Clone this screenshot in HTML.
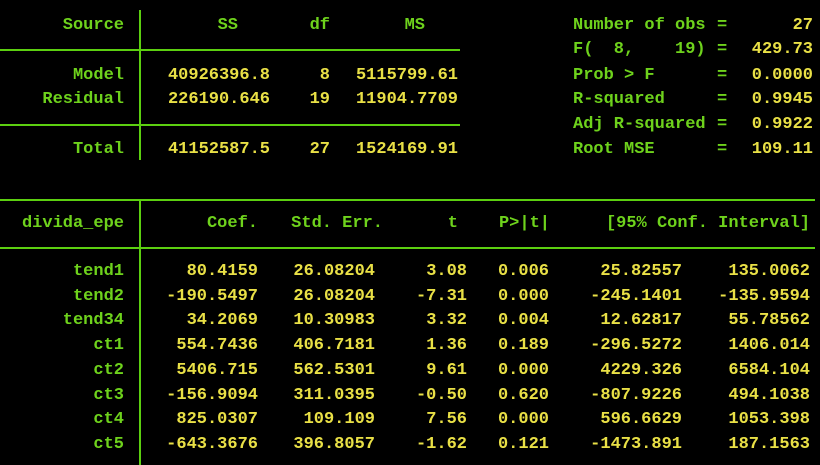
<!DOCTYPE html>
<html><head><meta charset="utf-8"><style>
html,body{margin:0;padding:0;background:#000;width:820px;height:465px;overflow:hidden}
body{position:relative;font-family:"Liberation Mono",monospace;font-weight:bold;font-size:17px}
.t{position:absolute;height:20px;line-height:20px;white-space:pre;margin-top:2px}
.g{color:#6ed21c}.y{color:#e9e046}
.h{position:absolute;height:2px;background:#5ccf10}
.v{position:absolute;width:2px;background:#5ccf10}
</style></head><body>
<div class="v" style="left:139px;top:10px;height:150px"></div>
<div class="h" style="left:0;top:49px;width:460px"></div>
<div class="h" style="left:0;top:124px;width:460px"></div>
<div class="h" style="left:0;top:199px;width:815px"></div>
<div class="h" style="left:0;top:247px;width:815px"></div>
<div class="v" style="left:139px;top:199px;height:266px"></div>

<div class="t g" style="right:696px;top:14px">Source</div>
<div class="t g" style="right:582px;top:14px">SS</div>
<div class="t g" style="right:490px;top:14px">df</div>
<div class="t g" style="right:395px;top:14px">MS</div>

<div class="t g" style="right:696px;top:64px">Model</div>
<div class="t y" style="right:550px;top:64px">40926396.8</div>
<div class="t y" style="right:490px;top:64px">8</div>
<div class="t y" style="right:362px;top:64px">5115799.61</div>

<div class="t g" style="right:696px;top:88px">Residual</div>
<div class="t y" style="right:550px;top:88px">226190.646</div>
<div class="t y" style="right:490px;top:88px">19</div>
<div class="t y" style="right:362px;top:88px">11904.7709</div>

<div class="t g" style="right:696px;top:138px">Total</div>
<div class="t y" style="right:550px;top:138px">41152587.5</div>
<div class="t y" style="right:490px;top:138px">27</div>
<div class="t y" style="right:362px;top:138px">1524169.91</div>

<div class="t g" style="left:573px;top:14px">Number of obs</div>
<div class="t g" style="left:573px;top:38px">F(  8,    19)</div>
<div class="t g" style="left:573px;top:64px">Prob &gt; F</div>
<div class="t g" style="left:573px;top:88px">R-squared</div>
<div class="t g" style="left:573px;top:113px">Adj R-squared</div>
<div class="t g" style="left:573px;top:138px">Root MSE</div>
<div class="t g" style="left:717px;top:14px">=</div>
<div class="t g" style="left:717px;top:38px">=</div>
<div class="t g" style="left:717px;top:64px">=</div>
<div class="t g" style="left:717px;top:88px">=</div>
<div class="t g" style="left:717px;top:113px">=</div>
<div class="t g" style="left:717px;top:138px">=</div>
<div class="t y" style="right:7px;top:14px">27</div>
<div class="t y" style="right:7px;top:38px">429.73</div>
<div class="t y" style="right:7px;top:64px">0.0000</div>
<div class="t y" style="right:7px;top:88px">0.9945</div>
<div class="t y" style="right:7px;top:113px">0.9922</div>
<div class="t y" style="right:7px;top:138px">109.11</div>

<div class="t g" style="right:696px;top:212px">divida_epe</div>
<div class="t g" style="right:562px;top:212px">Coef.</div>
<div class="t g" style="right:437px;top:212px">Std. Err.</div>
<div class="t g" style="right:362px;top:212px">t</div>
<div class="t g" style="right:270px;top:212px">P&gt;|t|</div>
<div class="t g" style="right:10px;top:212px">[95% Conf. Interval]</div>

<div class="t g" style="right:696px;top:260px">tend1</div>
<div class="t y" style="right:562px;top:260px">80.4159</div>
<div class="t y" style="right:445px;top:260px">26.08204</div>
<div class="t y" style="right:353px;top:260px">3.08</div>
<div class="t y" style="right:271px;top:260px">0.006</div>
<div class="t y" style="right:138px;top:260px">25.82557</div>
<div class="t y" style="right:10px;top:260px">135.0062</div>

<div class="t g" style="right:696px;top:285px">tend2</div>
<div class="t y" style="right:562px;top:285px">-190.5497</div>
<div class="t y" style="right:445px;top:285px">26.08204</div>
<div class="t y" style="right:353px;top:285px">-7.31</div>
<div class="t y" style="right:271px;top:285px">0.000</div>
<div class="t y" style="right:138px;top:285px">-245.1401</div>
<div class="t y" style="right:10px;top:285px">-135.9594</div>

<div class="t g" style="right:696px;top:309px">tend34</div>
<div class="t y" style="right:562px;top:309px">34.2069</div>
<div class="t y" style="right:445px;top:309px">10.30983</div>
<div class="t y" style="right:353px;top:309px">3.32</div>
<div class="t y" style="right:271px;top:309px">0.004</div>
<div class="t y" style="right:138px;top:309px">12.62817</div>
<div class="t y" style="right:10px;top:309px">55.78562</div>

<div class="t g" style="right:696px;top:334px">ct1</div>
<div class="t y" style="right:562px;top:334px">554.7436</div>
<div class="t y" style="right:445px;top:334px">406.7181</div>
<div class="t y" style="right:353px;top:334px">1.36</div>
<div class="t y" style="right:271px;top:334px">0.189</div>
<div class="t y" style="right:138px;top:334px">-296.5272</div>
<div class="t y" style="right:10px;top:334px">1406.014</div>

<div class="t g" style="right:696px;top:359px">ct2</div>
<div class="t y" style="right:562px;top:359px">5406.715</div>
<div class="t y" style="right:445px;top:359px">562.5301</div>
<div class="t y" style="right:353px;top:359px">9.61</div>
<div class="t y" style="right:271px;top:359px">0.000</div>
<div class="t y" style="right:138px;top:359px">4229.326</div>
<div class="t y" style="right:10px;top:359px">6584.104</div>

<div class="t g" style="right:696px;top:384px">ct3</div>
<div class="t y" style="right:562px;top:384px">-156.9094</div>
<div class="t y" style="right:445px;top:384px">311.0395</div>
<div class="t y" style="right:353px;top:384px">-0.50</div>
<div class="t y" style="right:271px;top:384px">0.620</div>
<div class="t y" style="right:138px;top:384px">-807.9226</div>
<div class="t y" style="right:10px;top:384px">494.1038</div>

<div class="t g" style="right:696px;top:408px">ct4</div>
<div class="t y" style="right:562px;top:408px">825.0307</div>
<div class="t y" style="right:445px;top:408px">109.109</div>
<div class="t y" style="right:353px;top:408px">7.56</div>
<div class="t y" style="right:271px;top:408px">0.000</div>
<div class="t y" style="right:138px;top:408px">596.6629</div>
<div class="t y" style="right:10px;top:408px">1053.398</div>

<div class="t g" style="right:696px;top:433px">ct5</div>
<div class="t y" style="right:562px;top:433px">-643.3676</div>
<div class="t y" style="right:445px;top:433px">396.8057</div>
<div class="t y" style="right:353px;top:433px">-1.62</div>
<div class="t y" style="right:271px;top:433px">0.121</div>
<div class="t y" style="right:138px;top:433px">-1473.891</div>
<div class="t y" style="right:10px;top:433px">187.1563</div>
</body></html>
